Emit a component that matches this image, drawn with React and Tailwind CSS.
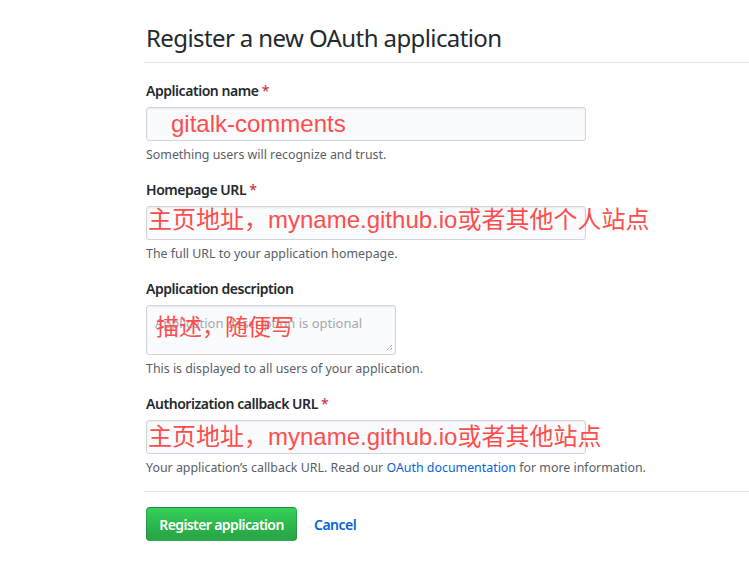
import React from "react";

const font = { fontFamily: '"Noto Sans", "Liberation Sans", sans-serif' };
const red = { fontFamily: '"Liberation Sans", "Noto Sans CJK SC", sans-serif' };
const cjk = { fontFamily: '"Noto Sans CJK SC", "Noto Sans", sans-serif' };

function Label({ children, required }) {
  return (
    <div className="text-[14px] leading-5 font-semibold tracking-[-0.45px] text-[#24292e] h-5">
      {children}
      {required && <span className="text-[#cb2431] font-normal"> *</span>}
    </div>
  );
}

function Note({ children }) {
  return <div className="mt-[5px] text-[12.4px] leading-[18px] text-[#586069]">{children}</div>;
}

function FakeInput({ children, pl = "pl-[1px]", shift = "" }) {
  return (
    <div
      className={`mt-[6px] w-[440px] h-[34px] bg-[#fafbfc] border border-[#d1d5da] rounded-[3px] flex items-center whitespace-nowrap overflow-visible ${pl}`}
      style={{ boxShadow: "inset 0 1px 2px rgba(27,31,35,0.075)" }}
    >
      <span className={`text-[24px] leading-none text-[#ff4d4d] ${shift}`} style={red}>
        {children}
      </span>
    </div>
  );
}

export default function App() {
  return (
    <div className="w-[749px] h-[570px] bg-white overflow-hidden" style={font}>
      <div className="pl-[146px]">
        <h1 className="pt-[23px] text-[24px] leading-[30px] font-normal tracking-[-0.6px] text-[#24292e]">
          Register a new OAuth application
        </h1>
        <div className="mt-[9px] -ml-[2px] h-px bg-[#e1e4e8]" />

        <div className="mt-[18px]">
          <Label required>Application name</Label>
          <FakeInput pl="pl-[24px]">gitalk-comments</FakeInput>
          <Note>Something users will recognize and trust.</Note>
        </div>

        <div className="mt-[16px]">
          <Label required>Homepage URL</Label>
          <FakeInput shift="-translate-y-[3px]">主页地址，myname.github.io或者其他个人站点</FakeInput>
          <Note>The full URL to your application homepage.</Note>
        </div>

        <div className="mt-[16px]">
          <Label>Application description</Label>
          <div
            className="relative mt-[6px] w-[250px] h-[50px] bg-[#fafbfc] border border-[#d1d5da] rounded-[3px]"
            style={{ boxShadow: "inset 0 1px 2px rgba(27,31,35,0.075)" }}
          >
            <span className="absolute left-[8px] top-[7px] text-[13px] leading-5 text-[#a3a8ae] whitespace-nowrap">
              Application description is optional
            </span>
            <span
              className="absolute left-[9px] top-[8px] text-[23px] leading-none text-[#ff4d4d] whitespace-nowrap"
              style={cjk}
            >
              描述，随便写
            </span>
            <svg className="absolute right-[2px] bottom-[2px]" width="9" height="9" viewBox="0 0 9 9">
              <path d="M8 2 L2 8 M8 5 L5 8" stroke="#7a7a7a" strokeWidth="1" strokeDasharray="1 1" />
            </svg>
          </div>
          <Note>This is displayed to all users of your application.</Note>
        </div>

        <div className="mt-[16px]">
          <Label required>Authorization callback URL</Label>
          <FakeInput>主页地址，myname.github.io或者其他站点</FakeInput>
          <Note>
            Your application’s callback URL. Read our{" "}
            <span className="text-[#0366d6]">OAuth documentation</span> for more information.
          </Note>
        </div>

        <div className="mt-[14px] -ml-[2px] h-px bg-[#e1e4e8]" />

        <div className="mt-[15px] flex items-center">
          <button
            className="h-[34px] w-[151px] rounded-[4px] border border-[rgba(27,31,35,0.2)] text-white text-[14px] font-semibold tracking-[-0.6px]"
            style={{ backgroundImage: "linear-gradient(-180deg, #34d058 0%, #28a745 90%)" }}
          >
            Register application
          </button>
          <span className="ml-[17px] text-[14px] font-semibold tracking-[-0.5px] text-[#0366d6]">Cancel</span>
        </div>
      </div>
    </div>
  );
}
